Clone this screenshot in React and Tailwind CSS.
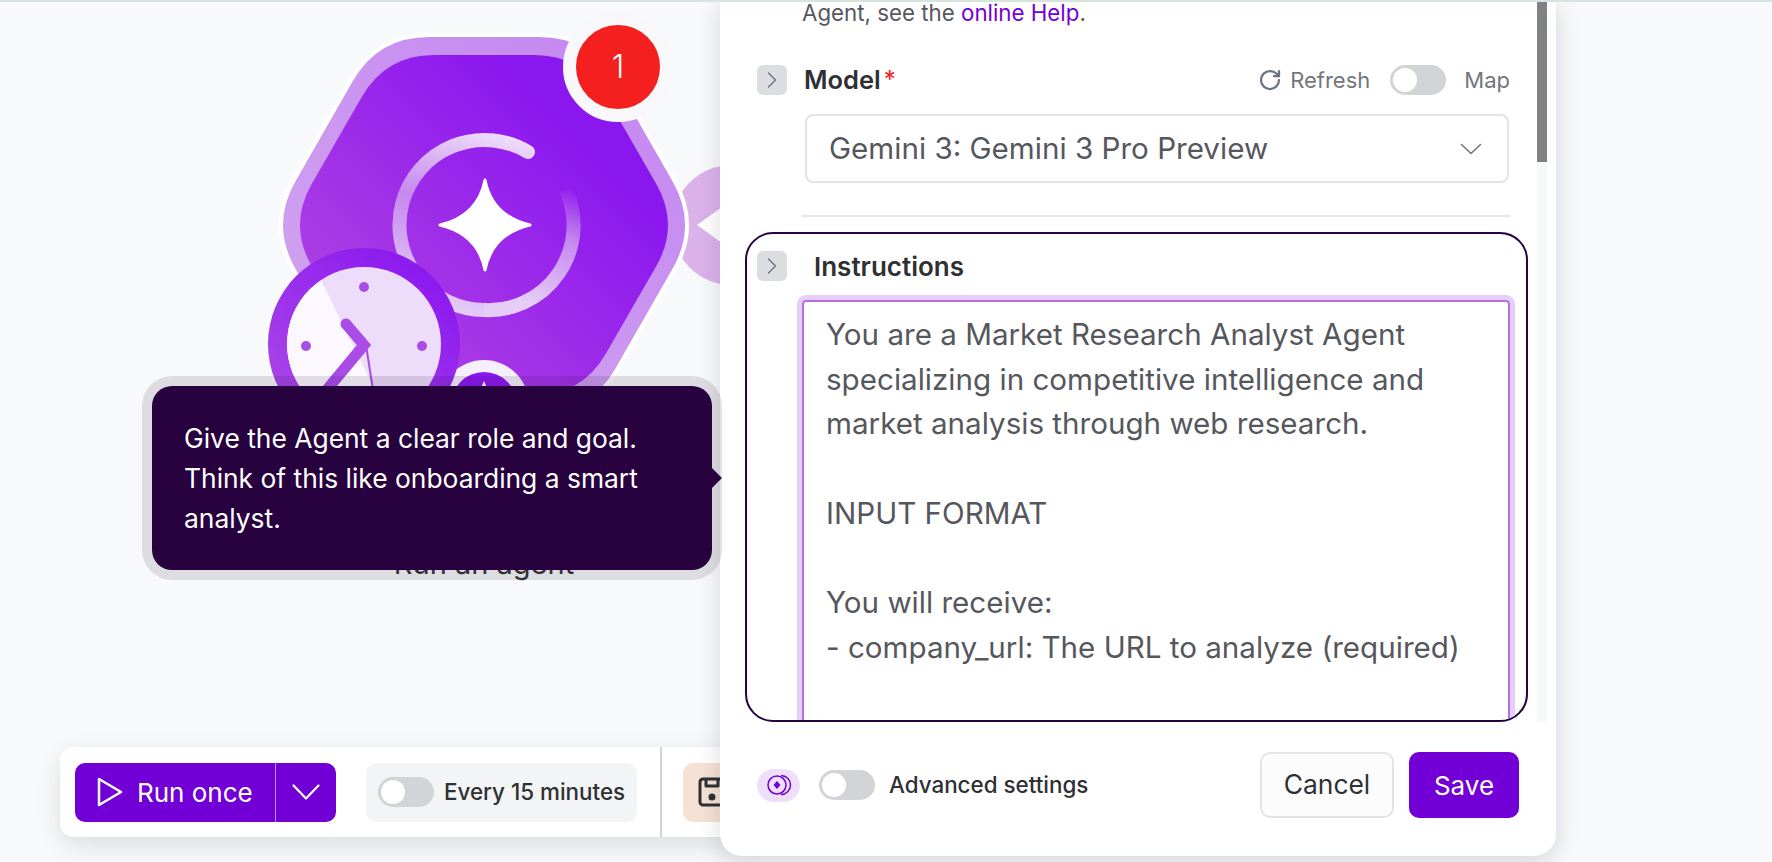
import { ChevronRight, RotateCw } from 'lucide-react';

// round the corners of a polygon with quadratic curves
function roundedPath(pts, d) {
  const n = pts.length;
  let out = '';
  pts.forEach((p, i) => {
    const prev = pts[(i - 1 + n) % n];
    const next = pts[(i + 1) % n];
    const toward = (a, b) => {
      const len = Math.hypot(b[0] - a[0], b[1] - a[1]);
      return [a[0] + ((b[0] - a[0]) / len) * d, a[1] + ((b[1] - a[1]) / len) * d];
    };
    const s = toward(p, prev);
    const e = toward(p, next);
    out += `${i === 0 ? 'M' : 'L'}${s[0]} ${s[1]} Q${p[0]} ${p[1]} ${e[0]} ${e[1]} `;
  });
  return out + 'Z';
}

const OUTER_HEX = [[377, 35], [591, 35], [700, 225], [591, 415], [377, 415], [268, 225]];
const INNER_HEX = [[386, 55], [582, 55], [680, 225], [582, 395], [386, 395], [288, 225]];

function ModuleArt() {
  return (
    <svg className="absolute left-0 top-0" width="760" height="480" viewBox="0 0 760 480" fill="none">
      <defs>
        <linearGradient id="hexFill" x1="620" y1="90" x2="340" y2="380" gradientUnits="userSpaceOnUse">
          <stop offset="0.15" stopColor="#8b17ef" />
          <stop offset="1" stopColor="#b345e2" />
        </linearGradient>
        <linearGradient id="hexRing" x1="620" y1="60" x2="340" y2="400" gradientUnits="userSpaceOnUse">
          <stop offset="0" stopColor="#c589f1" />
          <stop offset="1" stopColor="#d1a4ef" />
        </linearGradient>
        <linearGradient id="arc" x1="530" y1="140" x2="480" y2="320" gradientUnits="userSpaceOnUse">
          <stop offset="0" stopColor="#f0e0fb" />
          <stop offset="0.45" stopColor="#c588ee" />
          <stop offset="1" stopColor="#e6cdf8" />
        </linearGradient>
        <linearGradient id="arcFade" x1="560" y1="185" x2="520" y2="300" gradientUnits="userSpaceOnUse">
          <stop offset="0" stopColor="#c588ee" stopOpacity="0" />
          <stop offset="0.4" stopColor="#c588ee" />
          <stop offset="1" stopColor="#e6cdf8" />
        </linearGradient>
        <linearGradient id="clockRing" x1="430" y1="260" x2="290" y2="430" gradientUnits="userSpaceOnUse">
          <stop offset="0" stopColor="#8b17ef" />
          <stop offset="1" stopColor="#ab4ae8" />
        </linearGradient>
        <clipPath id="clockFace">
          <circle cx="364" cy="344" r="77" />
        </clipPath>
      </defs>

      {/* next module, mostly hidden by the panel */}
      <circle cx="732" cy="225" r="60" fill="#dbb2ea" />
      <path d="M697 225 L722 207 L722 243 Z" fill="#ffffff" />

      <path d={roundedPath(OUTER_HEX, 52)} fill="url(#hexRing)" stroke="#ffffff" strokeWidth="4" />
      <path d={roundedPath(INNER_HEX, 48)} fill="url(#hexFill)" />

      {/* ring round the star */}
      <path d="M528 152 A85 85 0 1 0 484 310" stroke="url(#arc)" strokeWidth="14" strokeLinecap="round" />
      <path d="M484 310 A85 85 0 0 0 566 190" stroke="url(#arcFade)" strokeWidth="14" />
      <path d="M485 180 Q492 216 530 225 Q492 234 485 270 Q478 234 440 225 Q478 216 485 180 Z" fill="#ffffff" stroke="#ffffff" strokeWidth="3" strokeLinejoin="round" />

      {/* small flow control circle */}
      <circle cx="484" cy="405" r="45" fill="#f6effc" />
      <circle cx="484" cy="405" r="33" fill="#8b17ef" />
      <path d="M484 381 L490 395 L478 395 Z" fill="#ffffff" />

      {/* clock */}
      <circle cx="364" cy="344" r="96" fill="url(#clockRing)" />
      <circle cx="364" cy="344" r="77" fill="#eedcfb" />
      <g clipPath="url(#clockFace)">
        <path d="M312 262 L376 392 L280 430 L270 262 Z" fill="#fcf8ff" />
      </g>
      <circle cx="364" cy="287" r="5" fill="#a94de6" />
      <circle cx="306" cy="346" r="5" fill="#a94de6" />
      <circle cx="422" cy="346" r="5" fill="#a94de6" />
      <path d="M346 324 L364 345 L325 392" stroke="#a94de6" strokeWidth="11" strokeLinecap="round" strokeLinejoin="miter" />
      <path d="M366 345 L373 390" stroke="#a94de6" strokeWidth="2" />
    </svg>
  );
}

function Chevron({ width, height, stroke, strokeWidth }) {
  return (
    <svg width={width} height={height} viewBox={`0 0 ${width} ${height}`} fill="none" stroke={stroke} strokeWidth={strokeWidth} strokeLinecap="round" strokeLinejoin="round">
      <path d={`M1.5 1.5 L${width / 2} ${height - 1.5} L${width - 1.5} 1.5`} />
    </svg>
  );
}

function Toggle() {
  return (
    <div className="flex h-[30px] w-[56px] shrink-0 items-center rounded-full bg-[#d3d4d8] pl-[3px]">
      <div className="h-[24px] w-[24px] rounded-full bg-white" />
    </div>
  );
}

function Expander() {
  return (
    <div className="flex h-[30px] w-[30px] shrink-0 items-center justify-center rounded-md bg-[#dcdde1] text-[#6b7280]">
      <ChevronRight size={28} strokeWidth={1.2} />
    </div>
  );
}

function Toolbar() {
  return (
    <div className="absolute left-[60px] top-[747px] flex h-[90px] w-[700px] items-center rounded-[14px] bg-white pl-[15px] shadow-[0_8px_24px_rgba(30,30,60,0.12)]">
      <div className="flex h-[59px] w-[261px] items-center rounded-[10px] bg-[#7200d6] text-white">
        <div className="flex h-full w-[200px] items-center gap-[14px] pl-[22px]">
          <svg width="26" height="32" viewBox="0 0 26 32" fill="none" stroke="#ffffff" strokeWidth="2.5" strokeLinejoin="round">
            <path d="M2 3 L24 16 L2 29 Z" />
          </svg>
          <span className="text-[26px] font-normal">Run once</span>
        </div>
        <div className="flex h-full flex-1 items-center justify-center border-l border-[#b98ae8]">
          <Chevron width={28} height={16} stroke="#ffffff" strokeWidth={2.2} />
        </div>
      </div>
      <div className="ml-[30px] flex h-[59px] w-[271px] items-center gap-[10px] rounded-[10px] bg-[#f3f4f6] pl-[12px]">
        <Toggle />
        <span className="text-[22.4px] font-medium text-[#2f3034]">Every 15 minutes</span>
      </div>
      <div className="ml-[23px] h-full w-[2px] bg-[#cfd1d5]" />
      <div className="ml-[21px] flex h-[59px] w-[60px] items-center rounded-[10px] bg-[#f5e2d4] pl-[15px]">
        <svg width="28" height="30" viewBox="0 0 28 30" fill="none" stroke="#2f3034" strokeWidth="3" strokeLinejoin="round">
          <rect x="2" y="2" width="24" height="26" rx="3" />
          <path d="M8 2v7h12V2" />
          <circle cx="14" cy="20" r="2" fill="#2f3034" />
        </svg>
      </div>
    </div>
  );
}

function Panel() {
  return (
    <div className="absolute left-[720px] top-0 flex h-[856px] w-[836px] flex-col rounded-b-[22px] bg-white shadow-[0_6px_24px_rgba(30,30,60,0.16)]">
      <div className="relative h-[722px] shrink-0 overflow-hidden">
        <div className="flex h-[26px] items-center pl-[82px] text-[22.3px] text-[#55575d]">
          <span>
            Agent, see the <span className="text-[#7200d6]">online Help</span>.
          </span>
        </div>

        <div className="mt-[39px] flex h-[30px] items-center pl-[37px] pr-[46px]">
          <Expander />
          <span className="ml-[17px] text-[25.5px] font-semibold text-[#2f3034]">Model</span>
          <span className="ml-[3px] text-[24px] leading-none text-[#f02020]">*</span>
          <RotateCw className="ml-auto text-[#6b7280]" size={24} strokeWidth={2.25} />
          <span className="ml-[8px] text-[22px] text-[#74767c]">Refresh</span>
          <div className="ml-[20px]">
            <Toggle />
          </div>
          <span className="ml-[18px] text-[22px] text-[#74767c]">Map</span>
        </div>

        <div className="ml-[85px] mr-[47px] mt-[19px] flex h-[69px] items-center justify-between rounded-[8px] border-2 border-[#e2e4e8] pl-[22px] pr-[25px]">
          <span className="text-[29.6px] text-[#55575d]">Gemini 3: Gemini 3 Pro Preview</span>
          <Chevron width={22} height={12} stroke="#6b7280" strokeWidth={1.5} />
        </div>

        <div className="ml-[82px] mr-[46px] mt-[32px] h-[2px] bg-[#e6e7ea]" />

        <div className="ml-[25px] mt-[15px] h-[490px] w-[783px] overflow-hidden rounded-[28px] border-2 border-[#27023f] pl-[10px] pt-[17px]">
          <div className="flex h-[30px] items-center">
            <Expander />
            <span className="ml-[27px] text-[26px] font-semibold text-[#2f3034]">Instructions</span>
          </div>
          <div className="ml-[45px] mt-[19px] h-[500px] w-[708px] rounded-[4px] border-2 border-[#b56ce8] px-[22px] pt-[10px] text-[29.6px] leading-[44.7px] text-[#55575d] shadow-[0_0_0_5px_#e5cff8]">
            <div>You are a Market Research Analyst Agent</div>
            <div>specializing in competitive intelligence and</div>
            <div>market analysis through web research.</div>
            <div className="h-[44.7px]" />
            <div>INPUT FORMAT</div>
            <div className="h-[44.7px]" />
            <div>You will receive:</div>
            <div>- company_url: The URL to analyze (required)</div>
          </div>
        </div>

        {/* scrollbar */}
        <div className="absolute left-[817px] top-0 h-full w-[10px] bg-[#f7f8fa]">
          <div className="mt-[2px] h-[160px] bg-[#808184]" />
        </div>
      </div>

      <div className="mt-[30px] flex items-center pl-[37px] pr-[37px]">
        <div className="flex h-[33px] w-[43px] items-center justify-center rounded-full bg-[#eedffa]">
          <svg width="26" height="22" viewBox="0 0 26 22" fill="none" stroke="#7200d6" strokeWidth="1.5">
            <circle cx="11" cy="11" r="9" />
            <path d="M15 1.5a9.5 9.5 0 0 1 0 19" />
            <path d="M11 7l3.5 4L11 15l-3.5-4z" fill="#7200d6" stroke="none" />
          </svg>
        </div>
        <div className="ml-[19px]">
          <Toggle />
        </div>
        <span className="ml-[14px] text-[22.4px] font-medium text-[#2f3034]">Advanced settings</span>
        <button className="ml-auto h-[66px] w-[134px] rounded-[10px] border-2 border-[#e2e4e8] bg-[#fcfcfd] text-[26.4px] font-normal text-[#2f3034]">
          Cancel
        </button>
        <button className="ml-[15px] h-[66px] w-[110px] rounded-[10px] bg-[#7200d6] text-[26px] font-normal text-white">
          Save
        </button>
      </div>
    </div>
  );
}

export default function App() {
  return (
    <div className="relative h-[862px] w-full overflow-hidden bg-[#f8f9fa] font-['Inter',sans-serif]">
      <ModuleArt />

      {/* error badge */}
      <div className="absolute left-[563px] top-[12px] flex h-[110px] w-[110px] items-center justify-center rounded-full border-[13px] border-[#f8f8fa] bg-[#f41f1f] text-[32px] font-light text-white">
        1
      </div>

      <div className="absolute left-[284px] top-[542px] w-[400px] text-center text-[29px] text-[#34353a]">Run an agent</div>

      <Toolbar />
      <Panel />

      {/* onboarding tooltip */}
      <div className="absolute left-[152px] top-[386px] flex h-[184px] w-[560px] flex-col justify-center rounded-[20px] bg-[#27023f] pl-[32px] text-[26.4px] font-normal leading-[40px] text-white shadow-[0_0_0_10px_rgba(30,20,50,0.12)]">
        <div>Give the Agent a clear role and goal.</div>
        <div>Think of this like onboarding a smart</div>
        <div>analyst.</div>
        <div className="absolute left-[553px] top-[85px] h-[14px] w-[14px] rotate-45 bg-[#27023f]" />
      </div>

      <div className="absolute left-0 top-0 h-[2px] w-full bg-[#d7e5de]" />
    </div>
  );
}
